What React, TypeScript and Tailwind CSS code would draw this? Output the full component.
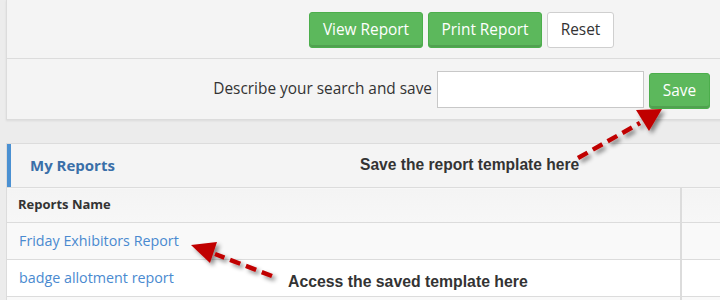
import React from 'react';

const sans = { fontFamily: '"Open Sans", "Liberation Sans", sans-serif' };
const arial = { fontFamily: '"Liberation Sans", Arial, sans-serif' };

function GreenButton({ label, className = '' }: { label: string; className?: string }) {
  return (
    <button
      className={`h-9 rounded-[3px] border border-[#4cae4c] bg-[#5cb85c] text-[15.4px] text-white shadow-[inset_0_-2px_0_rgba(0,0,0,0.12)] ${className}`}
    >
      {label}
    </button>
  );
}

export default function App() {
  return (
    <div className="relative h-[300px] w-[720px] overflow-hidden bg-[#ececec]" style={sans}>
      {/* search / actions panel */}
      <div className="ml-[6px] w-[730px] border border-t-0 border-[#dcdcdc] bg-[#f4f4f4] shadow-[0_1px_2px_rgba(0,0,0,0.08)]">
        <div className="flex justify-end gap-[5px] border-b border-[#dcdcdc] pt-[12px] pb-[10px] pr-[121px]">
          <GreenButton label="View Report" className="w-[114px]" />
          <GreenButton label="Print Report" className="w-[114px]" />
          <button className="h-9 w-[67px] rounded-[3px] border border-[#cfcfcf] bg-white text-[15.4px] text-[#333]">
            Reset
          </button>
        </div>
        <div className="flex h-[60px] items-center justify-end pr-[25px]">
          <span className="mr-[5px] text-[15.4px] text-[#333]">Describe your search and save</span>
          <input className="h-[37px] w-[207px] border border-[#c8c8c8] bg-white" />
          <GreenButton label="Save" className="ml-[5px] mt-[3px] w-[61px]" />
        </div>
      </div>

      {/* my reports panel */}
      <div className="ml-[6px] mt-[23px] w-[730px] border border-[#dcdcdc] bg-white">
        <div className="flex h-[43px] items-center border-l-4 border-[#4a90d2] bg-[#f4f4f4] pl-[19px]">
          <span className="text-[15px] font-bold text-[#3a6fa8]">My Reports</span>
        </div>
        <table className="w-full border-collapse text-left">
          <thead>
            <tr className="h-[35px] border-t border-[#dcdcdc] bg-gradient-to-b from-[#f4f4f4] to-[#f7f7f7]">
              <th className="w-[674px] border-r-2 border-[#dcdcdc] pl-[11px] text-[13px] font-bold text-[#333]">
                Reports Name
              </th>
              <th></th>
            </tr>
          </thead>
          <tbody>
            <tr className="h-[37px] border-t border-[#dcdcdc] bg-[#f9f9f9]">
              <td className="border-r-2 border-[#dcdcdc] pl-[12px] text-[14.3px] text-[#4a8ad0]">
                Friday Exhibitors Report
              </td>
              <td></td>
            </tr>
            <tr className="h-[37px] border-t border-[#dcdcdc] bg-white">
              <td className="border-r-2 border-[#dcdcdc] pl-[12px] text-[14.3px] text-[#4a8ad0]">
                badge allotment report
              </td>
              <td></td>
            </tr>
            <tr className="h-[37px] border-t border-[#dcdcdc] bg-[#f9f9f9]">
              <td className="border-r-2 border-[#dcdcdc]"></td>
              <td></td>
            </tr>
          </tbody>
        </table>
      </div>

      {/* annotations */}
      <span className="absolute left-[360px] top-[153px] text-[15.6px] font-bold text-[#333]" style={arial}>
        Save the report template here
      </span>
      <span className="absolute left-[288px] top-[270px] text-[15.8px] font-bold text-[#333]" style={arial}>
        Access the saved template here
      </span>
      <svg className="pointer-events-none absolute left-0 top-0" width="720" height="300">
        <defs>
          <filter id="sh" x="-20%" y="-20%" width="140%" height="140%">
            <feDropShadow dx="3" dy="3" stdDeviation="2" floodColor="#000" floodOpacity="0.45" />
          </filter>
        </defs>
        <g filter="url(#sh)">
          <line x1="578" y1="158" x2="640" y2="123" stroke="#c00000" strokeWidth="4.5" strokeDasharray="11 6" />
          <polygon points="662,109 636,110 649,131" fill="#c00000" />
          <line x1="272" y1="276" x2="215" y2="254" stroke="#c00000" strokeWidth="4.5" strokeDasharray="11 6" />
          <polygon points="191,245 217,242 210,263" fill="#c00000" />
        </g>
      </svg>
    </div>
  );
}
